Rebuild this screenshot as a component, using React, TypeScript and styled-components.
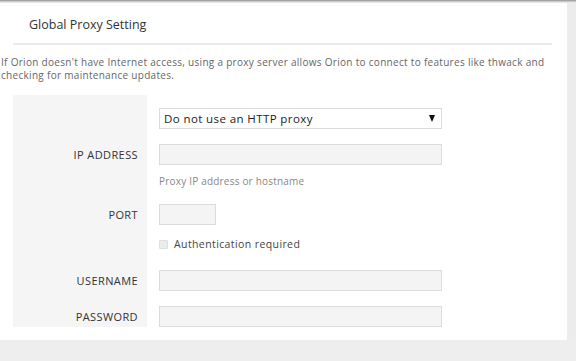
import styled, { createGlobalStyle } from "styled-components";

const GlobalStyle = createGlobalStyle`
  html, body {
    margin: 0;
    padding: 0;
    background: #eeeeee;
    font-family: "Open Sans", "Liberation Sans", sans-serif;
  }
`;

const S_Page = styled.div`
  width: 576px;
  height: 361px;
  display: flex;
  flex-direction: column;
  overflow: hidden;
`;

const S_TopShade = styled.div`
  height: 3px;
  background: linear-gradient(#8f8f8f, #d6d6d6 60%, #f4f4f4);
`;

const S_Body = styled.div`
  display: flex;
`;

const S_Panel = styled.div`
  width: 567px;
  height: 337px;
  background: #fff;
  box-sizing: border-box;
`;

const S_Header = styled.div`
  margin: 0 15px 0 13px;
  padding: 13px 0 0 16px;
  height: 42px;
  box-sizing: border-box;
  border-bottom: 2px solid #ebebeb;
  font-size: 12.5px;
  color: #333;
`;

const S_Desc = styled.p`
  margin: 11px 0 0 1px;
  font-size: 10px;
  letter-spacing: 0.3px;
  line-height: 13px;
  color: #666;
`;

const S_Form = styled.div`
  margin: 13px 0 0 13px;
  width: 539px;
  height: 232px;
  box-sizing: border-box;
  padding-top: 13px;
  background: linear-gradient(to right, #f5f5f5 134px, transparent 134px);
  display: flex;
  flex-direction: column;
`;

const S_Row = styled.div<{ $mt?: number }>`
  display: flex;
  align-items: center;
  margin-top: ${(p) => p.$mt ?? 0}px;
`;

const S_Label = styled.div`
  width: 134px;
  box-sizing: border-box;
  padding-right: 9px;
  text-align: right;
  font-size: 11px;
  letter-spacing: 0.4px;
  color: #333;
  text-transform: uppercase;
  flex-shrink: 0;
`;

const S_Field = styled.div`
  padding-left: 12px;
  display: flex;
  align-items: center;
`;

const S_Select = styled.div`
  width: 283px;
  height: 21px;
  box-sizing: border-box;
  border: 1px solid #dcdcdc;
  background: #fff;
  display: flex;
  align-items: center;
  justify-content: space-between;
  padding: 0 6px 0 4px;
  font-size: 11.5px;
  letter-spacing: 0.4px;
  color: #222;
`;

const S_Arrow = styled.span`
  width: 0;
  height: 0;
  border-left: 3.5px solid transparent;
  border-right: 3.5px solid transparent;
  border-top: 7px solid #111;
`;

const S_Input = styled.div<{ $w?: number }>`
  width: ${(p) => p.$w ?? 283}px;
  height: 21px;
  box-sizing: border-box;
  border: 1px solid #dcdcdc;
  background: #f4f4f4;
`;

const S_Hint = styled.div`
  font-size: 10px;
  letter-spacing: 0.2px;
  line-height: 14px;
  color: #888;
`;

const S_Check = styled.span`
  width: 9px;
  height: 9px;
  box-sizing: border-box;
  border: 1px solid #dedede;
  border-radius: 1px;
  background: #ececec;
  margin-right: 6px;
`;

const S_CheckText = styled.span`
  font-size: 10.5px;
  letter-spacing: 0.4px;
  line-height: 14px;
  color: #444;
`;

const S_Side = styled.div`
  flex: 1;
  background: #ececec;
`;

const App = () => {
  return (
    <S_Page>
      <GlobalStyle />
      <S_TopShade />
      <S_Body>
        <S_Panel>
          <S_Header>Global Proxy Setting</S_Header>
          <S_Desc>
            If Orion doesn't have Internet access, using a proxy server allows Orion to connect to features like thwack and
            <br />
            checking for maintenance updates.
          </S_Desc>
          <S_Form>
            <S_Row>
              <S_Label />
              <S_Field>
                <S_Select>
                  <span>Do not use an HTTP proxy</span>
                  <S_Arrow />
                </S_Select>
              </S_Field>
            </S_Row>
            <S_Row $mt={15}>
              <S_Label>IP Address</S_Label>
              <S_Field>
                <S_Input />
              </S_Field>
            </S_Row>
            <S_Row $mt={9}>
              <S_Label />
              <S_Field>
                <S_Hint>Proxy IP address or hostname</S_Hint>
              </S_Field>
            </S_Row>
            <S_Row $mt={16}>
              <S_Label>Port</S_Label>
              <S_Field>
                <S_Input $w={57} />
              </S_Field>
            </S_Row>
            <S_Row $mt={12}>
              <S_Label />
              <S_Field>
                <S_Check />
                <S_CheckText>Authentication required</S_CheckText>
              </S_Field>
            </S_Row>
            <S_Row $mt={19}>
              <S_Label>Username</S_Label>
              <S_Field>
                <S_Input />
              </S_Field>
            </S_Row>
            <S_Row $mt={15}>
              <S_Label>Password</S_Label>
              <S_Field>
                <S_Input />
              </S_Field>
            </S_Row>
          </S_Form>
        </S_Panel>
        <S_Side />
      </S_Body>
    </S_Page>
  );
};

export default App;
